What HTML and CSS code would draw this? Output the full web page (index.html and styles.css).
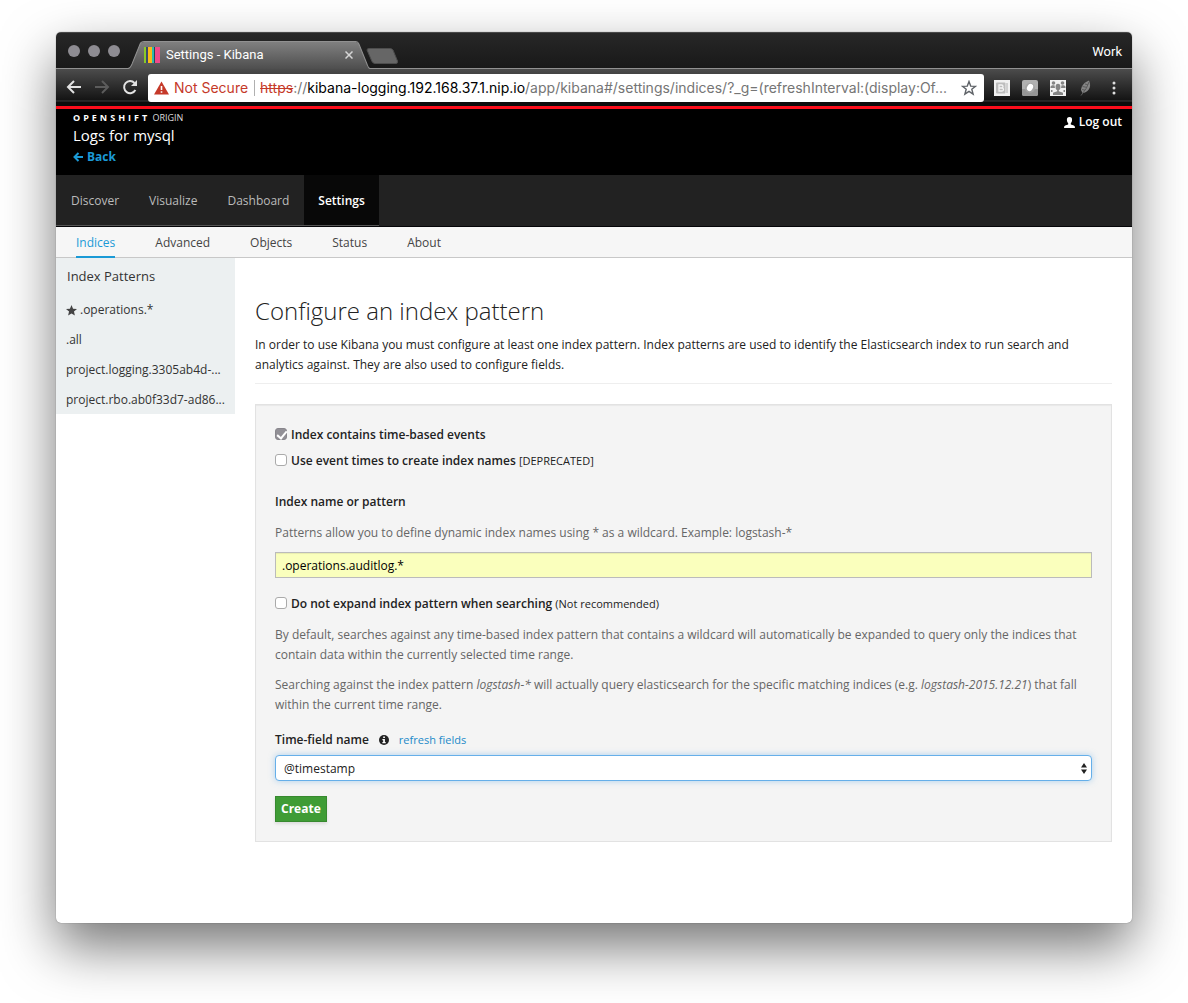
FILE: index.html
```html
<!DOCTYPE html>
<html lang="en">
<head>
<meta charset="utf-8">
<meta name="viewport" content="width=device-width, initial-scale=1">
<title>Settings - Kibana</title>
<link rel="stylesheet" href="styles.css">
</head>
<body>
<div class="window">
  <div class="tabstrip">
    <div class="lights"><i class="light"></i><i class="light"></i><i class="light"></i></div>
    <div class="tab">
      <svg class="tab-shape" viewBox="0 0 240 28" preserveAspectRatio="none" aria-hidden="true">
        <defs><linearGradient id="tabFill" x1="0" y1="0" x2="0" y2="1"><stop offset="0" stop-color="#808080"/><stop offset="1" stop-color="#4e4e4e"/></linearGradient></defs>
        <path d="M0 28C3 27 3 25 4 23L12 3Q13 1 16 1H226Q228 1 229 3L237 23C238 26 238 27 240 28Z" fill="url(#tabFill)"/>
        <path d="M0 27.500C3 27 3 25 4 23L12 3Q13 .5 16 .5H226Q228 .5 229 3L237 23C238 26 238 27 240 27.500" fill="none" stroke="#919191"/>
      </svg>
      <svg class="favicon" width="16" height="16" viewBox="0 0 16 16" aria-hidden="true"><path fill="#8ac926" d="M0 0h2v16H0z"/><path fill="#3b4a6b" d="M2 0h2v16H2z"/><path fill="#fbba16" d="M4 0h4v16H4z"/><path fill="#2fb8ac" d="M8 0h2v16H8z"/><path fill="#234b56" d="M10 0h1v16h-1z"/><path fill="#ef4a8b" d="M11 0h5v16h-5z"/></svg>
      <span class="tab-title">Settings - Kibana</span>
      <button class="icon-button tab-close" aria-label="Close tab"><svg width="8" height="8" viewBox="0 0 8 8"><path d="M.5.5l7 7M7.500.5l-7 7" stroke="#d6d6d6" stroke-width="1.500"/></svg></button>
    </div>
    <button class="icon-button new-tab" aria-label="New tab"><svg width="33" height="16" viewBox="0 0 33 16"><path d="M3 .5H24Q26 .5 27 2L31.500 13Q32 15.500 30 15.500H9Q7 15.500 6 13.500L1.200 2.500Q.5.5 3 .5Z" fill="#666" stroke="#4d4d4d"/></svg></button>
    <button class="profile">Work</button>
  </div>

  <div class="toolbar">
    <button class="icon-button" aria-label="Back"><svg width="16" height="16" viewBox="0 0 16 16" fill="none" stroke="#e2e2e2" stroke-width="2"><path d="M15 8H2.500M8 2L2 8l6 6"/></svg></button>
    <button class="icon-button" aria-label="Forward"><svg width="16" height="16" viewBox="0 0 16 16" fill="none" stroke="#5c5c5c" stroke-width="2"><path d="M1 8h12.500M8 2l6 6-6 6"/></svg></button>
    <button class="icon-button" aria-label="Reload"><svg width="16" height="16" viewBox="0 0 16 16"><path d="M13.400 11A6 6 0 1 1 12.500 4" fill="none" stroke="#e2e2e2" stroke-width="2"/><path d="M15 1v6H9z" fill="#e2e2e2"/></svg></button>
    <div class="address">
      <svg width="15" height="14" viewBox="0 0 15 14" aria-hidden="true"><path d="M7.500.5L15 13.500H0z" fill="#c53929"/><path d="M6.700 5h1.600v4H6.700zM6.700 10.200h1.600v1.600H6.700z" fill="#fff"/></svg>
      <span class="insecure">Not Secure</span>
      <span class="url"><s>https</s>://<b>kibana-logging.192.168.37.1.nip.io</b>/app/kibana#/settings/indices/?_g=(refreshInterval:(display:Of...</span>
      <button class="icon-button" aria-label="Bookmark"><svg width="16" height="16" viewBox="0 0 16 16"><path d="M8 1.500l1.700 4.600 4.900.2-3.800 3 1.300 4.800L8 11.400l-4.100 2.700 1.300-4.800-3.800-3 4.900-.2z" fill="none" stroke="#5f6368" stroke-width="1.400"/></svg></button>
    </div>
    <div class="extensions">
      <svg width="16" height="16" viewBox="0 0 16 16" aria-hidden="true"><path fill="#f1f1f1" d="M0 0h16v16H0z"/><rect x="2" y="2.500" width="9.500" height="11" rx="1" fill="#bdbdbd"/><path d="M5 5h2.500a1.500 1.500 0 0 1 0 3H5zM5 8h3a1.500 1.500 0 0 1 0 3H5z" fill="none" stroke="#f4f4f4" stroke-width="1.300"/><path d="M13 3v10" stroke="#bdbdbd" stroke-width="1.200"/></svg>
      <svg width="16" height="16" viewBox="0 0 16 16" aria-hidden="true"><rect width="16" height="16" rx="2" fill="#b0b0b0"/><path d="M0 9h16v5a2 2 0 0 1-2 2H2a2 2 0 0 1-2-2z" fill="#969696"/><circle cx="8" cy="8" r="5" fill="#a4a4a4"/><ellipse cx="8" cy="7.500" rx="2.800" ry="3.800" transform="rotate(30 8 7.500)" fill="#fff"/></svg>
      <svg width="16" height="16" viewBox="0 0 16 16" aria-hidden="true"><path fill="#f2f2f2" d="M0 0h16v16H0z"/><g fill="#858585"><circle cx="3.500" cy="3" r="1.800"/><circle cx="12.500" cy="3" r="1.800"/><path d="M.5 8V6.500L2 5.200h2.500L5 8zM15.500 8V6.500L14 5.200h-2.500L11 8z"/><ellipse cx="8" cy="7" rx="2.400" ry="3.200"/><path d="M7.200 9h1.600v2.300l4.200 1.500V15H3v-2.200l4.200-1.500zM1 10h1.500v2H1zM13.500 10H15v2h-1.500z"/></g></svg>
      <svg width="16" height="16" viewBox="0 0 16 16" aria-hidden="true"><path d="M11 .5C7 2 3.500 5 3 10l1.500 3C9 13 14.500 8 11 .5z" fill="#858585"/><path d="M11 2Q9.500 8 3 15.500M4.500 6.500l4 .8M4 9.500l3 .7M7 4l3 .8" fill="none" stroke="#5a5a5a"/></svg>
      <svg class="menu-dots" width="4" height="14" viewBox="0 0 4 14" fill="#dedede" aria-hidden="true"><circle cx="2" cy="2" r="1.500"/><circle cx="2" cy="7" r="1.500"/><circle cx="2" cy="12" r="1.500"/></svg>
    </div>
  </div>

  <header class="masthead">
    <div>
      <div class="brand"><strong>OPENSHIFT</strong> ORIGIN</div>
      <div class="project">Logs for mysql</div>
      <a class="back" href="#back"><svg width="10" height="10" viewBox="0 0 10 10" aria-hidden="true"><path d="M10 5H1.500M5.500 1l-4 4 4 4" fill="none" stroke="#1b9ad6" stroke-width="2"/></svg>Back</a>
    </div>
    <a class="logout" href="#logout"><svg width="11" height="11" viewBox="0 0 11 11" aria-hidden="true"><path d="M5.500 0C7.400 0 8.200 1.300 8.100 3 8 4.800 7.300 5.500 6.800 6.200v1.300l3 1.100Q11 9 11 11H0Q0 9 1.200 8.600l3-1.100V6.200C3.700 5.500 3 4.800 2.900 3 2.800 1.300 3.600 0 5.500 0z" fill="#fff"/></svg>Log out</a>
  </header>

  <nav class="mainnav">
    <a href="#discover">Discover</a><a href="#visualize">Visualize</a><a href="#dashboard">Dashboard</a><a class="active" href="#settings">Settings</a>
  </nav>
  <nav class="subnav">
    <a class="active" href="#indices">Indices</a><a href="#advanced">Advanced</a><a href="#objects">Objects</a><a href="#status">Status</a><a href="#about">About</a>
  </nav>

  <div class="columns">
    <aside class="sidebar">
      <h5>Index Patterns</h5>
      <ul>
        <li><a href="#operations"><svg width="11" height="11" viewBox="0 0 12 12" aria-hidden="true"><path d="M6 0l1.700 4 4.300.4-3.300 2.800 1 4.300L6 9.200l-3.700 2.300 1-4.300L0 4.400 4.300 4z" fill="#444"/></svg> .operations.*</a></li>
        <li><a href="#all">.all</a></li>
        <li><a href="#logging">project.logging.3305ab4d-...</a></li>
        <li><a href="#rbo">project.rbo.ab0f33d7-ad86...</a></li>
      </ul>
    </aside>
    <main class="content">
      <h2>Configure an index pattern</h2>
      <p class="intro">In order to use Kibana you must configure at least one index pattern. Index patterns are used to identify the Elasticsearch index to run search and analytics against. They are also used to configure fields.</p>
      <form class="well">
        <label class="check"><input type="checkbox" checked><span>Index contains time-based events</span></label>
        <label class="check"><input type="checkbox"><span>Use event times to create index names <small>[DEPRECATED]</small></span></label>
        <label class="field-label name-label" for="pattern">Index name or pattern</label>
        <p class="help">Patterns allow you to define dynamic index names using * as a wildcard. Example: logstash-*</p>
        <input class="text-input" id="pattern" type="text" value=".operations.auditlog.*">
        <label class="check expand"><input type="checkbox"><span>Do not expand index pattern when searching <small>(Not recommended)</small></span></label>
        <p class="help">By default, searches against any time-based index pattern that contains a wildcard will automatically be expanded to query only the indices that contain data within the currently selected time range.</p>
        <p class="help">Searching against the index pattern <em>logstash-*</em> will actually query elasticsearch for the specific matching indices (e.g. <em>logstash-2015.12.21</em>) that fall within the current time range.</p>
        <div class="time-row">
          <label class="field-label" for="timefield">Time-field name</label>
          <svg width="10" height="10" viewBox="0 0 10 10" aria-hidden="true"><circle cx="5" cy="5" r="5" fill="#222"/><path d="M4.200 1.500h1.700v1.500H4.200zM3.400 4h2.500v3h.8v1.200H3.400V7h.8V5.200h-.8z" fill="#fff"/></svg>
          <a href="#refresh">refresh fields</a>
        </div>
        <div class="select-wrap">
          <select id="timefield"><option>@timestamp</option></select>
          <svg class="arrows" width="6" height="11" viewBox="0 0 6 11" aria-hidden="true"><path d="M3 0l3 4.500H0zM3 11L0 6.500h6z" fill="#222"/></svg>
        </div>
        <button class="create" type="button">Create</button>
      </form>
    </main>
  </div>
</div>
</body>
</html>
```
FILE: styles.css
```css
* { box-sizing: border-box; }
body {
  margin: 0;
  min-height: 100vh;
  padding: 32px 56px 80px;
  display: flex;
  background: #fff;
  color: #222;
  font: 12px/20px "Open Sans", sans-serif;
}
a { text-decoration: none; }
svg { display: block; flex: none; }
.window {
  flex: 1;
  min-width: 0;
  display: flex;
  flex-direction: column;
  overflow: hidden;
  background: #fff;
  border-radius: 5px;
  box-shadow: 0 0 1px rgba(0, 0, 0, .6), 0 24px 54px rgba(0, 0, 0, .54);
}
.icon-button { padding: 0; border: 0; background: none; display: flex; }

/* Browser chrome */
.tabstrip {
  display: flex;
  align-items: flex-end;
  height: 37px;
  background: linear-gradient(#272727, #191919);
  border-top: 1px solid #484848;
  border-bottom: 1px solid #919191;
  font: 13px/16px Roboto, sans-serif;
  color: #fff;
}
.lights { display: flex; gap: 8px; padding: 0 8px 11px 12px; }
.light { width: 12px; height: 12px; border-radius: 50%; background: #8e8c92; }
.tab {
  position: relative;
  display: flex;
  align-items: center;
  width: 242px;
  height: 28px;
  margin-bottom: -1px;
  padding: 0 17px 0 16px;
}
.tab-shape { position: absolute; inset: 0; width: 100%; height: 100%; }
.favicon, .tab-title, .tab-close { position: relative; }
.tab-title { flex: 1; margin-left: 6px; }
.new-tab { margin-left: -4px; padding-bottom: 4px; }
.profile {
  margin: 0 10px 8px auto;
  padding: 0;
  border: 0;
  background: none;
  color: #fff;
  font: 13px/16px Roboto, sans-serif;
}
.toolbar {
  display: flex;
  align-items: center;
  gap: 12px;
  height: 37px;
  padding: 0 16px 0 10px;
  background: linear-gradient(#4c4c4c, #141414 31px, #3c3c3c 32px, #0b0b0b 33px);
}
.toolbar > .icon-button { margin-bottom: 1px; }
.address {
  flex: 1;
  min-width: 0;
  display: flex;
  align-items: center;
  gap: 5px;
  height: 28px;
  margin: 0 -2px;
  padding: 0 7px 0 6px;
  background: #fff;
  border-radius: 3px;
  color: #757575;
  font: 14px/20px Inter, sans-serif;
}
.insecure { color: #c53929; white-space: nowrap; padding-right: 6px; border-right: 1px solid #b0b0b0; line-height: 16px; }
.url { flex: 1; white-space: nowrap; }
.url s { color: #c53929; }
.url b { color: #000; font-weight: 400; }
.extensions { display: flex; align-items: center; gap: 12px; }
.menu-dots { margin-left: 6px; }

/* Application header */
.masthead {
  display: flex;
  justify-content: space-between;
  height: 69px;
  padding: 0 10px 0 17px;
  background: #000;
  border-top: 3px solid #fc0d1b;
  color: #fff;
}
.brand { padding-top: 1px; font-size: 9px; line-height: 16px; color: #ddd; }
.brand strong { color: #fff; letter-spacing: 3px; }
.project { font-size: 15px; line-height: 18px; }
.back { display: flex; align-items: center; gap: 4px; line-height: 26px; font-weight: 700; color: #1b9ad6; }
.logout { display: flex; align-items: center; gap: 4px; height: 26px; font-weight: 600; color: #fff; }

.mainnav { display: flex; height: 52px; background: #222; border-bottom: 1px solid #050508; }
.mainnav a { padding: 0 15px; line-height: 52px; height: 51px; color: #bbb; border-bottom: 1px solid #555; }
.mainnav .active { padding: 0 14px; background: #080808; color: #fff; font-weight: 600; }
.subnav { display: flex; gap: 40px; height: 31px; padding: 0 20px; background: #f6f6f6; border-bottom: 1px solid #c8c8c8; }
.subnav a { height: 31px; line-height: 31px; color: #444; }
.subnav .active { color: #1b9ad6; border-bottom: 2px solid #1b9ad6; }

/* Page body */
.columns { display: flex; align-items: flex-start; }
.sidebar { flex: none; width: 179px; padding: 8px 10px 0; background: #ecf0f1; }
.sidebar h5 { margin: 0 1px 8px; font-size: 13px; line-height: 20px; font-weight: 400; color: #333; }
.sidebar ul { margin: 0; padding: 0; list-style: none; }
.sidebar a { display: flex; align-items: center; gap: 3px; height: 30px; padding-top: 2px; color: #333; white-space: nowrap; }
.content { flex: 1; min-width: 0; padding: 36px 20px 20px; }
h2 { margin: 0 0 7px; font-size: 24px; line-height: 34px; font-weight: 300; }
.intro { margin: 0 0 20px; padding-bottom: 8px; border-bottom: 1px solid #eee; }
.well {
  display: flex;
  flex-direction: column;
  align-items: flex-start;
  padding: 20px 19px 19px;
  background: #f4f4f4;
  border: 1px solid #e2e2e2;
  box-shadow: inset 0 1px 1px rgba(0, 0, 0, .05);
}
.check { display: flex; align-items: center; gap: 4px; margin-bottom: 6px; font-weight: 600; }
.check small { font-size: 11px; font-weight: 400; }
.check input {
  appearance: none;
  flex: none;
  width: 12px;
  height: 12px;
  margin: 0 0 2px;
  background: #fff;
  border: 1px solid #aaa;
  border-radius: 3px;
}
.check input:checked { background: #929096; border-color: #88868c; }
.check input:checked::after {
  content: "";
  display: block;
  width: 4px;
  height: 8px;
  margin-left: 3px;
  border: solid #fff;
  border-width: 0 2px 2px 0;
  transform: rotate(40deg);
}
.field-label { font-weight: 600; }
.name-label { margin: 15px 0 11px; }
.name-label + .help { margin-bottom: 9px; }
.help { margin: 0 0 10px; color: #666; }
.text-input {
  width: 100%;
  height: 26px;
  padding: 0 6px;
  background: #faffbd;
  border: 1px solid #bbb;
  box-shadow: inset 0 1px 1px rgba(0, 0, 0, .075);
  color: #000;
  font: inherit;
}
.expand { margin: 16px 0 11px; }
.time-row { display: flex; align-items: center; gap: 10px; margin: 5px 0; }
.time-row a { font-size: 11px; color: #1b8ac9; }
.select-wrap { position: relative; width: 100%; }
select {
  appearance: none;
  display: block;
  width: 100%;
  height: 26px;
  padding: 2px 8px 0;
  background: #fff;
  border: 1px solid #66afe9;
  border-radius: 4px;
  box-shadow: 0 0 6px rgba(102, 175, 233, .5);
  color: #222;
  font: inherit;
}
.arrows { position: absolute; top: 8px; right: 5px; }
.create {
  height: 26px;
  margin-top: 15px;
  padding: 0 5px;
  background: #3f9c35;
  border: 1px solid #37892f;
  box-shadow: 0 2px 3px rgba(0, 0, 0, .1);
  color: #fff;
  font: 700 12px/20px "Open Sans", sans-serif;
}
```
